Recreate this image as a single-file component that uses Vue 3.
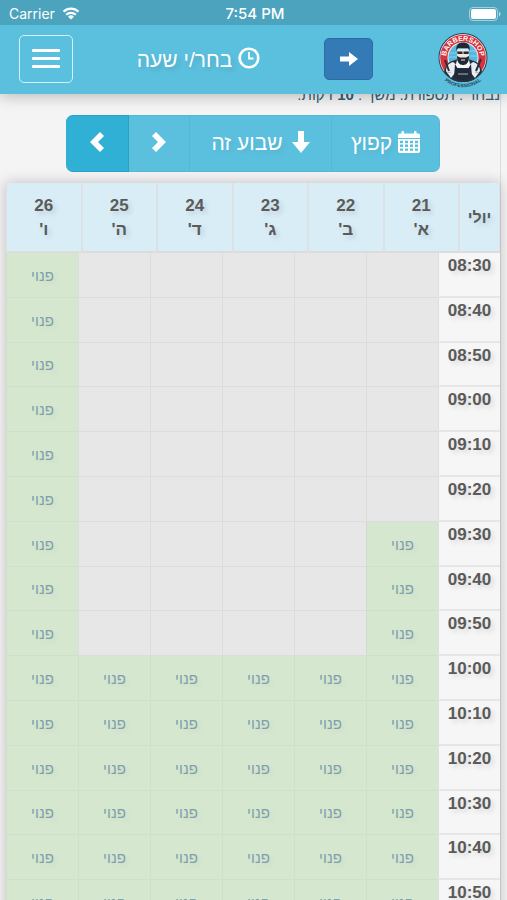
<template>
  <div class="page" dir="rtl">
    <header class="top">
      <div class="status" dir="ltr">
        <span class="carrier">
          Carrier
          <svg width="18" height="13" viewBox="0 0 18 13" aria-hidden="true">
            <path d="M1.5 4.6a10.8 10.8 0 0 1 15 0" fill="none" stroke="#fff" stroke-width="2.2" />
            <path d="M4.2 7.7a7 7 0 0 1 9.6 0" fill="none" stroke="#fff" stroke-width="2.2" />
            <path d="M9 12.6 6 9.7a4.3 4.3 0 0 1 6 0z" fill="#fff" />
          </svg>
        </span>
        <span class="clock">7:54 PM</span>
        <span class="battery">
          <svg width="32" height="14" viewBox="0 0 32 14" aria-hidden="true">
            <rect x="0.5" y="0.5" width="28" height="13" rx="3.5" fill="none" stroke="#fff" stroke-opacity="0.5" />
            <rect x="2" y="2" width="25" height="10" rx="2" fill="#fff" />
            <path d="M30 4.5c2 .8 2 4.200 0 5z" fill="#fff" fill-opacity="0.6" />
          </svg>
        </span>
      </div>

      <nav class="navbar">
        <a class="logo" href="#" aria-label="Barbershop">
          <svg width="52" height="56" viewBox="0 0 52 56" direction="ltr">
            <defs>
              <path id="arc-top" d="M10.700 32.500A16.800 16.800 0 1 1 41.300 32.500" />
              <path id="arc-bottom" d="M-2 35A29.500 29.500 0 0 0 54 35" />
            </defs>
            <circle cx="26" cy="25.500" r="24.500" fill="#2c3f54" />
            <circle cx="26" cy="25.500" r="23.500" fill="#f1e9ea" />
            <circle cx="26" cy="25.500" r="22.800" fill="#d8333d" />
            <circle cx="26" cy="25.500" r="15.500" fill="#e9f4f8" />
            <circle cx="26" cy="25.500" r="14.500" fill="#55b8dc" />
            <path d="M13 21h9M12 25h8M32 19h7M33 24h7" stroke="#8fd3ea" stroke-width="1" />
            <path d="M7 40c1-5 3-9 8-11l6-2h10l6 2c5 2 7 6 8 11-5 7-11 10-19 10S12 47 7 40z" fill="#26303f" />
            <path d="M9 39c0-5 3-8 7-9l4 3-2 8-4 5zM43 39c0-5-3-8-7-9l-4 3 2 8 4 5z" fill="#e9edf0" />
            <path d="M20 28l6 5 6-5 2 8H18z" fill="#f3f5f6" />
            <path d="M18 32l3 5h10l3-5 1 13c-5 4-13 4-18 0z" fill="#202a38" />
            <path d="M10 41l4-1M38 40l4 1M21 42h10" stroke="#a9b2bb" stroke-width="1" />
            <path d="M8 28l4 11M44 27l-5 12" stroke="#26303f" stroke-width="2" />
            <path d="M20 17h12v8c0 4-2 7-6 7s-6-3-6-7z" fill="#f4e5df" />
            <path d="M19.500 19c-1-6 2-8.500 6.500-8.500s7.500 2.500 6.500 8.500l-1.500-3H21z" fill="#202833" />
            <path d="M20 24l3 1.500h6L32 24c0 6-2 9-6 9s-6-3-6-9z" fill="#202833" />
            <path d="M20 19.500h5.500v2.500h-5zM26.500 19.500H32l-.5 2.500h-5z" fill="#202833" />
            <path d="M24 28h4" stroke="#f4e5df" stroke-width="1" />
            <text class="logo-top">
              <textPath href="#arc-top" startOffset="50%" text-anchor="middle">BARBERSHOP</textPath>
            </text>
            <text class="logo-bottom">
              <textPath href="#arc-bottom" startOffset="50%" text-anchor="middle">PROFESSIONAL</textPath>
            </text>
          </svg>
        </a>

        <button class="forward" type="button" aria-label="חזרה">
          <svg width="18" height="14" viewBox="0 0 18 14">
            <path d="M0 4.500h9V0l9 7-9 7V9.500H0z" fill="#fff" />
          </svg>
        </button>

        <h1 class="title">
          <svg width="22" height="22" viewBox="0 0 22 22" aria-hidden="true">
            <circle cx="11" cy="11" r="9.300" fill="none" stroke="#fff" stroke-width="2.600" />
            <path d="M11 5v6.500h4.500" fill="none" stroke="#fff" stroke-width="1.800" />
          </svg>
          בחר/י שעה
        </h1>

        <button class="burger" type="button" aria-label="תפריט">
          <span></span>
          <span></span>
          <span></span>
        </button>
      </nav>
    </header>

    <main class="content">
      <p class="summary">נבחר : תספורת. משך : <b>10</b> דקות.</p>

      <div class="toolbar">
        <button class="tool jump" type="button">
          <svg width="22" height="22" viewBox="0 0 22 22" aria-hidden="true">
            <path d="M0 7V4.500C0 3 1 2.500 2 2.500h1.500V1.300C3.500.4 4 0 4.800 0S6 .4 6 1.300v1.200h10V1.300c0-.9.5-1.300 1.300-1.300s1.200.4 1.200 1.300v1.200H20c1 0 2 .5 2 2V7z" fill="#fff" />
            <path d="M0 8h22V20c0 1.300-.8 2-2 2H2c-1.200 0-2-.7-2-2z" fill="#fff" />
            <path
              v-for="row in calendarRows"
              :key="row"
              :d="`M2 ${row}h3m2 0h3m2 0h3m2 0h3`"
              stroke="#5bc0de"
              stroke-width="2.400"
            />
          </svg>
          קפוץ
        </button>
        <button class="tool week" type="button">
          <svg width="18" height="22" viewBox="0 0 18 22" aria-hidden="true">
            <path d="M6 0h6v11h6l-9 11L0 11h6z" fill="#fff" />
          </svg>
          שבוע זה
        </button>
        <button class="tool next" type="button" aria-label="הקודם">
          <svg width="14" height="20" viewBox="0 0 14 20">
            <path d="M4 0l10 10L4 20l-4-4 6-6-6-6z" fill="#fff" />
          </svg>
        </button>
        <button class="tool prev active" type="button" aria-label="הבא">
          <svg width="14" height="20" viewBox="0 0 14 20">
            <path d="M10 0L0 10l10 10 4-4-6-6 6-6z" fill="#fff" />
          </svg>
        </button>
      </div>

      <div class="schedule">
        <table class="days">
          <thead>
            <tr>
              <th class="month">יולי</th>
              <th v-for="day in days" :key="day.date">{{ day.date }}<br />{{ day.name }}</th>
            </tr>
          </thead>
        </table>
        <table class="slots">
          <tbody>
            <tr v-for="slot in slots" :key="slot.time">
              <th>{{ slot.time }}</th>
              <td v-for="(free, index) in slot.free" :key="index" :class="{ free }">
                <a v-if="free" href="#">פנוי</a>
              </td>
            </tr>
          </tbody>
        </table>
      </div>
    </main>
  </div>
</template>

<script setup>
const calendarRows = [11, 14.8, 18.6];

const days = [
  { date: 21, name: "א'" },
  { date: 22, name: "ב'" },
  { date: 23, name: "ג'" },
  { date: 24, name: "ד'" },
  { date: 25, name: "ה'" },
  { date: 26, name: "ו'" }
];

const times = [
  '08:30', '08:40', '08:50', '09:00', '09:10', '09:20', '09:30', '09:40',
  '09:50', '10:00', '10:10', '10:20', '10:30', '10:40', '10:50'
];

// first free time of each day
const opening = ['09:30', '10:00', '10:00', '10:00', '10:00', '08:30'];

const slots = times.map((time) => ({
  time,
  free: opening.map((start) => time >= start)
}));
</script>

<style>
body {
  background-color: #f4f4f4;
}
</style>

<style scoped>
.page {
  height: 100vh;
  overflow: hidden;
  display: flex;
  flex-direction: column;
  background-color: #f4f4f4;
  font-family: "Liberation Sans", Arial, sans-serif;
  color: #5a5a5a;
}

.top {
  position: relative;
  z-index: 2;
  flex-shrink: 0;
  background-color: #5bc0de;
  box-shadow: 0 2px 14px rgba(0, 0, 0, 0.25);
}

.status {
  display: grid;
  grid-template-columns: 1fr auto 1fr;
  align-items: center;
  height: 25px;
  padding: 2px 6px 0 9px;
  box-sizing: border-box;
  background-color: #4ba3bd;
  color: #fff;
  font-family: Inter, sans-serif;
  font-size: 14px;
}

.carrier {
  display: flex;
  align-items: center;
  gap: 7px;
}

.clock {
  font-size: 15px;
  font-weight: 500;
}

.battery {
  display: flex;
  justify-content: flex-end;
}

.navbar {
  display: flex;
  align-items: center;
  justify-content: space-between;
  height: 69px;
  padding: 0 18px 0 19px;
}

.logo {
  display: block;
  height: 56px;
}

.logo svg {
  overflow: visible;
}

.logo-top {
  fill: #fff;
  font-size: 7px;
  font-weight: 700;
}

.logo-bottom {
  fill: #2c3f54;
  font-size: 5px;
  font-weight: 700;
}

.forward {
  display: flex;
  align-items: center;
  justify-content: center;
  width: 49px;
  height: 42px;
  margin-bottom: 2px;
  padding: 0;
  border: 1px solid #2e6da4;
  border-radius: 5px;
  background-color: #337ab7;
}

.title {
  display: flex;
  align-items: center;
  gap: 6px;
  margin: 0;
  color: #fff;
  font-size: 21px;
  font-weight: 400;
  text-shadow: 3px 3px 5px rgba(0, 0, 0, 0.12);
}

.title svg {
  margin-bottom: 4px;
}

.burger {
  display: flex;
  flex-direction: column;
  align-items: center;
  justify-content: center;
  gap: 5px;
  width: 54px;
  height: 48px;
  margin-bottom: 2px;
  padding: 0;
  border: 1px solid #d3f1fa;
  border-radius: 5px;
  background: none;
}

.burger span {
  width: 28px;
  height: 3px;
  border-radius: 1px;
  background-color: #fff;
}

.content {
  margin-right: 6px;
  padding-left: 6px;
  border-right: 1px solid #dcdcde;
}

.summary {
  margin: -9px 0 10px;
  color: #31627a;
  font-size: 15px;
  line-height: 20px;
}

.toolbar {
  display: flex;
  justify-content: center;
  margin-bottom: 11px;
}

.tool {
  display: flex;
  align-items: center;
  justify-content: center;
  gap: 9px;
  height: 57px;
  padding: 0 0 2px;
  border: 1px solid #54b7d6;
  border-left-width: 0;
  background-color: #5bc0de;
  color: #fff;
  font-family: inherit;
  font-size: 21px;
  text-shadow: 3px 3px 5px rgba(0, 0, 0, 0.08);
}

.tool svg {
  margin-bottom: 2px;
}

.jump {
  width: 108px;
  gap: 6px;
  border-radius: 0 7px 7px 0;
}

.week {
  width: 142px;
}

.next {
  width: 61px;
}

.prev {
  width: 63px;
  border-radius: 7px 0 0 7px;
}

.tool.active {
  border-color: #28a1c5;
  background-color: #31b0d5;
}

.schedule {
  box-shadow: 0 0 12px rgba(60, 40, 50, 0.28);
}

table {
  width: 100%;
  border-collapse: separate;
  border-spacing: 0;
  table-layout: fixed;
}

th,
td {
  box-sizing: border-box;
  padding: 2px 0 0;
  text-align: center;
}

th {
  font-size: 17px;
  font-weight: 700;
  text-shadow: 3px 3px 5px rgba(0, 0, 0, 0.12);
}

.days {
  background-color: #d9edf7;
}

.days th {
  height: 70px;
  border-left: 1px solid #dde1e5;
  border-right: 1px solid #dde1e5;
  border-bottom: 2px solid #dcdcdf;
  line-height: 24px;
}

.days .month {
  width: 41px;
  font-size: 16px;
}

.slots {
  height: 672px;
}

.slots th {
  width: 62px;
  padding-top: 3px;
  border-bottom: 2px solid #e6e6e6;
  border-left: 1px solid #dedede;
  background-color: #f6f6f6;
  line-height: 20px;
  vertical-align: top;
}

.slots td {
  border-bottom: 1px solid #dcdcdc;
  border-left: 1px solid #dcdcdc;
  background-color: #e7e7e7;
}

.slots .free {
  border-color: #cfdfca;
  background-color: #d5e8cf;
}

.slots a {
  color: #7f9fae;
  font-size: 15px;
  text-decoration: none;
  text-shadow: 3px 3px 5px rgba(0, 0, 0, 0.06);
}
</style>
